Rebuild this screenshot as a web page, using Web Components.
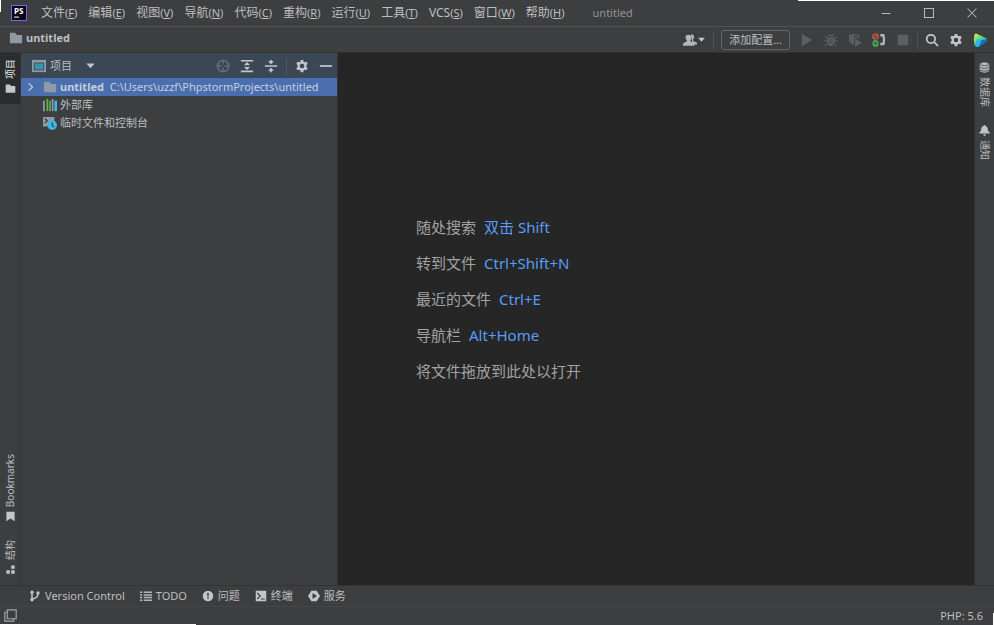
<!DOCTYPE html>
<html lang="zh-CN">
<head>
    <meta charset="UTF-8">
    <meta name="viewport" content="width=device-width, initial-scale=1.0">
    <title>untitled</title>
    <style>
        html, body {
            height: 100%;
            margin: 0;
        }
        body {
            background: #3c3e40;
            color: #bdbfc1;
            font: 11px/16px "Noto Sans", "Noto Sans CJK SC", sans-serif;
        }
    </style>
</head>
<body>

    <ide-window>
        <ide-titlebar slot="title">
            <ide-menu key="F">文件</ide-menu>
            <ide-menu key="E">编辑</ide-menu>
            <ide-menu key="V">视图</ide-menu>
            <ide-menu key="N">导航</ide-menu>
            <ide-menu key="C">代码</ide-menu>
            <ide-menu key="R">重构</ide-menu>
            <ide-menu key="U">运行</ide-menu>
            <ide-menu key="T">工具</ide-menu>
            <ide-menu key="S">VCS</ide-menu>
            <ide-menu key="W">窗口</ide-menu>
            <ide-menu key="H">帮助</ide-menu>
            <span slot="caption">untitled</span>
        </ide-titlebar>

        <ide-navbar slot="nav">untitled</ide-navbar>

        <ide-strip slot="left" side="left">
            <ide-strip-button icon="folder" active>项目</ide-strip-button>
            <ide-strip-button slot="end" icon="bookmark">Bookmarks</ide-strip-button>
            <ide-strip-button slot="end" icon="structure">结构</ide-strip-button>
        </ide-strip>

        <ide-project slot="project">
            <span slot="heading">项目</span>
            <ide-tree-row icon="folder-blue" expandable selected><b>untitled</b> C:\Users\uzzf\PhpstormProjects\untitled</ide-tree-row>
            <ide-tree-row icon="library">外部库</ide-tree-row>
            <ide-tree-row icon="scratch">临时文件和控制台</ide-tree-row>
        </ide-project>

        <ide-welcome slot="editor">
            <ide-hint keys="双击 Shift">随处搜索</ide-hint>
            <ide-hint keys="Ctrl+Shift+N">转到文件</ide-hint>
            <ide-hint keys="Ctrl+E">最近的文件</ide-hint>
            <ide-hint keys="Alt+Home">导航栏</ide-hint>
            <ide-hint>将文件拖放到此处以打开</ide-hint>
        </ide-welcome>

        <ide-strip slot="right" side="right">
            <ide-strip-button icon="database">数据库</ide-strip-button>
            <ide-strip-button icon="bell">通知</ide-strip-button>
        </ide-strip>

        <ide-toolbar slot="tools">
            <ide-tool icon="branch">Version Control</ide-tool>
            <ide-tool icon="list">TODO</ide-tool>
            <ide-tool icon="problem">问题</ide-tool>
            <ide-tool icon="terminal">终端</ide-tool>
            <ide-tool icon="service">服务</ide-tool>
        </ide-toolbar>

        <ide-status slot="status">PHP: 5.6</ide-status>
    </ide-window>

</body>

<script>

    // every icon is drawn on a 16 x 16 grid
    const ICONS = {
        'folder': '<path fill="#c3c5c7" d="M1 2h6l2 2.500h6V14H1z"/>',
        'folder-blue': '<path fill="#8e9ba5" d="M1 2h6l2 2.500h6V14H1z"/>',
        'bookmark': '<path fill="#c3c5c7" d="M2 1h12v14l-6-4-6 4z"/>',
        'structure': '<path fill="#c3c5c7" d="M9 2h5v5H9zM2 9h5v5H2zM9 9h5v5H9z"/>',
        'database': '<g fill="#b4b6b8"><path d="M1 3q7-5 14 0v10q-7 5-14 0z"/></g><path fill="none" stroke="#3c3e40" stroke-width="1" d="M1 4q7 3 14 0M1 8q7 3 14 0M1 12q7 3 14 0"/>',
        'bell': '<path fill="#c0c2c4" d="M8 0q1 0 1.500 1.500Q13 2.500 13 8l2.500 3v1.500H.5V11L3 8q0-5.500 3.500-6.500Q7 0 8 0zM6 13.500h4Q9.500 16 8 16t-2-2.500z"/>',
        'window': '<path fill="#8e9ba5" d="M0 1h16v14H0z"/><path fill="#3b4754" d="M2 4h12v9H2z"/><path fill="#3694ac" d="M3 5h10v7H3z"/>',
        'down': '<path fill="#c3c5c7" d="M2 5h12l-6 7z"/>',
        'chevron': '<path fill="none" stroke="#b8c2d2" stroke-width="1.800" d="M5 3l5 5-5 5"/>',
        'target': '<g fill="none" stroke="#66717b" stroke-width="1.500"><circle cx="8" cy="8" r="6.500"/><path d="M8 1v5M8 10v5M1 8h5M10 8h5"/></g>',
        'expand': '<g fill="#c3c5c7"><path d="M1 1h14v1.800H1zM1 13.200h14V15H1zM8 3.500l3.500 3.500h-7zM8 12.500l3.500-3.500h-7z"/></g>',
        'collapse': '<g fill="#c3c5c7"><path d="M1 7.100h14v1.800H1zM8 6L4.500 2.500H7V1h2v1.500h2.500zM8 10l-3.500 3.500H7V15h2v-1.500h2.500z"/></g>',
        'gear': '<path fill="#c3c5c7" fill-rule="evenodd" d="M6.600 1h2.800l.4 2 1.300.8 2-.7 1.400 2.400L13 7v2l1.500 1.500-1.400 2.400-2-.7-1.300.8-.4 2H6.600l-.4-2-1.300-.8-2 .7-1.400-2.400L3 9V7L1.500 5.500l1.400-2.400 2 .7L6.200 3zM8 5.400a2.600 2.600 0 1 0 0 5.200 2.600 2.600 0 0 0 0-5.200z"/>',
        'hide': '<path fill="#c3c5c7" d="M1 7h14v2H1z"/>',
        'library': '<path fill="#8e9ba5" d="M0 3h2v12H0z"/><path fill="#62b543" d="M4 1h2v14H4z"/><path fill="#4fae5a" d="M7 3h2v12H7z"/><path fill="#8e9ba5" d="M10 1h2v14h-2z"/><path fill="#40b6e0" d="M13 3h3v12h-3z"/>',
        'scratch': '<path fill="#8e9ba5" d="M0 1h13v7L6 12H0z"/><path fill="none" stroke="#34383b" stroke-width="1.300" d="M2 3l3 2.500L2 8M6 8.500h2"/><circle cx="10.500" cy="10.500" r="5.500" fill="#40b6e0"/><path fill="none" stroke="#234a5c" stroke-width="1.300" d="M10.500 7v4l2.500 1.500"/>',
        'user': '<g fill="#b4b6b8"><path d="M9 1.500c4 0 4.500 3.500 2.500 6V9l4.500 2v2H11z"/><path d="M6 2c4 0 4.500 4 2.500 6.500v1l4.500 2.500v2.500H0V12l4.500-2.500v-1C2 6 2.500 2 6 2z"/></g>',
        'play': '<path fill="#5c5e60" d="M2 1l12 7-12 7z"/>',
        'bug': '<g fill="#5c5e60"><path d="M5 4q3-4 6 0zM4 5h8v5q-1 5-4 5t-4-5z"/><path stroke="#5c5e60" stroke-width="1.300" d="M1 4l4 3M15 4l-4 3M0 9h16M1 15l4-4M15 15l-4-4M5 1l2 3M11 1L9 4"/></g><path stroke="#3c3e40" d="M6 8h4M6 11h4"/>',
        'coverage': '<path fill="#5c5e60" d="M1 2l6-1 6 1v4L7 6v8q-6-3-6-7zM8 6l8 5-8 5z"/><path fill="#3c3e40" d="M7 3h4v2H7z"/>',
        'phone': '<g fill="none"><circle cx="4" cy="4" r="3" stroke="#c75450" stroke-width="1.600"/><path d="M2 6l4-4" stroke="#c75450" stroke-width="1.300"/><ellipse cx="4" cy="12" rx="2.500" ry="3" stroke="#49a650" stroke-width="2"/><path d="M1 10h6M1 13h6" stroke="#49a650"/></g><path fill="#b4b6b8" d="M9.500 1H14q2 7 0 13H9.500v-3H12q.8-3.500 0-7H9.500z"/>',
        'stop': '<path fill="#5c5e60" d="M2 2h12v12H2z"/>',
        'search': '<g fill="none" stroke="#c3c5c7" stroke-width="2"><circle cx="6.800" cy="6.800" r="4.800"/><path d="M10 10l5 5"/></g>',
        'toolbox': '<defs><linearGradient id="g" x1="0" y1="0" x2="1" y2="1"><stop offset="0" stop-color="#f8ee3c"/><stop offset=".45" stop-color="#4fd58a"/><stop offset="1" stop-color="#1d9be8"/></linearGradient></defs><path fill="url(#g)" d="M2 1q1-1 3 0l10 5q2 2 0 4l-9 6q-3 0-4-2Q0 8 2 1z"/><path fill="#1769c9" d="M9 8l7-1q0 2-1 3l-9 6z"/><path fill="#27b9e8" d="M5 6l5 3-4 7q-3 0-4-2z"/>',
        'branch': '<g fill="none" stroke="#c3c5c7" stroke-width="2"><path d="M4 3v10M4 12q8-1 8-7"/></g><g fill="#c3c5c7"><circle cx="4" cy="3" r="2.200"/><circle cx="4" cy="13" r="2.200"/><circle cx="12" cy="4" r="2.200"/></g>',
        'list': '<path fill="#b4b6b8" d="M0 2h3v2H0zM5 2h11v2H5zM0 5.500h3v2H0zM5 5.500h11v2H5zM0 9h3v2H0zM5 9h11v2H5zM0 12.500h3v2H0zM5 12.500h11v2H5z"/>',
        'problem': '<circle cx="8" cy="8" r="7" fill="#c3c5c7"/><path fill="#3c3e40" d="M7 3.500h2v5H7zM7 10h2v2H7z"/>',
        'terminal': '<path fill="#c3c5c7" d="M1 1h14v14H1z"/><path fill="none" stroke="#3c3e40" stroke-width="1.600" d="M3 4l4 4-4 4M8 12h5"/>',
        'service': '<path fill="#c3c5c7" d="M4.500 1h7L16 8l-4.500 7h-7L0 8z"/><path fill="#3c3e40" d="M6 4l6 4-6 4z"/>',
        'layout': '<g fill="none" stroke="#a5a7a9" stroke-width="1.400"><path d="M4 1h11v11H4z"/><path d="M4 4H1v11h11v-3"/></g>',
        'minimize': '<path fill="#b4b6b8" d="M2 8h12v1.300H2z"/>',
        'maximize': '<path fill="none" stroke="#b4b6b8" stroke-width="1.400" d="M2 2h12v12H2z"/>',
        'close': '<path fill="none" stroke="#b4b6b8" stroke-width="1.400" d="M2 2l12 12M14 2L2 14"/>',
        'logo': '<path fill="#7567e8" d="M0 0h16v16H0z"/><path fill="#0c0718" d="M1 1h14v14H1z"/><path fill="#d8d8dc" d="M3 11.500h5v1.200H3z"/>'
    };

    // shared by all the components: open shadow root + cloned template
    class IdeElement extends HTMLElement {
        constructor() {
            super();
            this.attachShadow({mode: 'open'});
        }

        connectedCallback() {
            const template = document.createElement('template');
            template.innerHTML = `
                <style>
                    * { box-sizing: border-box; }
                    :host { display: block; }
                    button {
                        display: flex;
                        align-items: center;
                        margin: 0;
                        padding: 0;
                        border: 0;
                        background: none;
                        color: inherit;
                        font: inherit;
                        white-space: nowrap;
                    }
                </style>
                ${this.render()}
            `;
            this.shadowRoot.replaceChildren(template.content.cloneNode(true));
        }
    }

    class IdeIcon extends IdeElement {
        render() {
            return `
                <style>
                    :host { display: block; flex: none; width: var(--icon, 14px); height: var(--icon, 14px); }
                    svg { display: block; width: 100%; height: 100%; }
                </style>
                <svg viewBox="0 0 16 16" aria-hidden="true">${ICONS[this.getAttribute('name')]}</svg>
            `;
        }
    }

    class IdeWindow extends IdeElement {
        render() {
            return `
                <style>
                    :host {
                        position: relative;
                        display: grid;
                        grid-template-rows: 27px 26px 1fr 21px 19px;
                        height: 100vh;
                        overflow: hidden;
                    }
                    main {
                        display: grid;
                        grid-template-columns: 21px minmax(200px, 317px) 1fr 20px;
                        min-height: 0;
                    }
                    /* bright desktop showing at the window's edges */
                    i { position: absolute; background: #fff; }
                    .nw { left: 0; top: 0; width: 1px; height: 12px; }
                    .ne { right: 0; top: 0; width: 196px; height: 1px; }
                    .sw { left: 0; bottom: 0; width: 196px; height: 1px; }
                    .se { right: 0; bottom: 0; width: 1px; height: 12px; }
                </style>
                <slot name="title"></slot>
                <slot name="nav"></slot>
                <main>
                    <slot name="left"></slot>
                    <slot name="project"></slot>
                    <slot name="editor"></slot>
                    <slot name="right"></slot>
                </main>
                <slot name="tools"></slot>
                <slot name="status"></slot>
                <i class="nw"></i><i class="ne"></i><i class="sw"></i><i class="se"></i>
            `;
        }
    }

    class IdeTitlebar extends IdeElement {
        render() {
            return `
                <style>
                    :host { display: flex; align-items: center; padding-left: 11px; border-bottom: 1px solid #505254; }
                    .logo { position: relative; --icon: 16px; }
                    .logo span { position: absolute; left: 3px; top: 1px; color: #fff; font: bold 8px/9px "Noto Sans", sans-serif; }
                    nav { display: flex; gap: 11px; margin-left: 14px; }
                    .caption { margin-left: 28px; color: #929496; }
                    .buttons { display: flex; gap: 31px; margin-left: auto; padding-right: 16px; --icon: 12px; }
                </style>
                <div class="logo"><ide-icon name="logo"></ide-icon><span>PS</span></div>
                <nav><slot></slot></nav>
                <div class="caption"><slot name="caption"></slot></div>
                <div class="buttons">
                    <button aria-label="最小化"><ide-icon name="minimize"></ide-icon></button>
                    <button aria-label="最大化"><ide-icon name="maximize"></ide-icon></button>
                    <button aria-label="关闭"><ide-icon name="close"></ide-icon></button>
                </div>
            `;
        }
    }

    class IdeMenu extends IdeElement {
        render() {
            return `
                <style>
                    button { display: block; font-size: 12px; }
                    small { font-size: 11px; }
                </style>
                <button><slot></slot><small>(<u>${this.getAttribute('key')}</u>)</small></button>
            `;
        }
    }

    class IdeNavbar extends IdeElement {
        render() {
            return `
                <style>
                    :host { display: flex; align-items: center; padding: 0 7px 0 9px; border-bottom: 1px solid #2f3133; }
                    .crumb { display: flex; align-items: center; gap: 3px; margin-bottom: 3px; font-weight: bold; }
                    .actions { display: flex; align-items: center; gap: 10px; margin-left: auto; }
                    .user { gap: 0; }
                    .user ide-icon + ide-icon { --icon: 9px; }
                    .config { height: 20px; padding: 0 7px; border: 1px solid #636567; border-radius: 3px; }
                    hr { width: 1px; height: 18px; margin: 0 -3px; border: 0; background: #505254; }
                </style>
                <div class="crumb"><ide-icon name="folder-blue"></ide-icon><slot></slot></div>
                <div class="actions">
                    <button class="user" aria-label="用户"><ide-icon name="user"></ide-icon><ide-icon name="down"></ide-icon></button>
                    <hr>
                    <button class="config">添加配置...</button>
                    <button aria-label="运行"><ide-icon name="play"></ide-icon></button>
                    <button aria-label="调试"><ide-icon name="bug"></ide-icon></button>
                    <button aria-label="覆盖率"><ide-icon name="coverage"></ide-icon></button>
                    <button aria-label="监听"><ide-icon name="phone"></ide-icon></button>
                    <button aria-label="停止"><ide-icon name="stop"></ide-icon></button>
                    <hr>
                    <button aria-label="搜索"><ide-icon name="search"></ide-icon></button>
                    <button aria-label="设置"><ide-icon name="gear"></ide-icon></button>
                    <button aria-label="工具箱"><ide-icon name="toolbox"></ide-icon></button>
                </div>
            `;
        }
    }

    class IdeStrip extends IdeElement {
        render() {
            return `
                <style>
                    :host { display: flex; flex-direction: column; justify-content: space-between; }
                    :host([side="left"]) { border-right: 1px solid #323436; }
                    :host([side="right"]) { padding-top: 9px; border-left: 1px solid #323436; }
                    div { display: flex; flex-direction: column; gap: 18px; }
                    .end { padding-bottom: 10px; }
                </style>
                <div><slot></slot></div>
                <div class="end"><slot name="end"></slot></div>
            `;
        }
    }

    class IdeStripButton extends IdeElement {
        render() {
            return `
                <style>
                    :host { --icon: 11px; font-size: 10px; }
                    :host([active]) { padding: 6px 0 10px; background: #2a2c2e; color: #e6e8ea; }
                    button { flex-direction: column; gap: 4px; width: 100%; }
                    span { writing-mode: vertical-rl; text-orientation: sideways; }
                    .left { flex-direction: column-reverse; }
                    .left span { transform: rotate(180deg); }
                </style>
                <button class="${this.parentElement.getAttribute('side')}">
                    <ide-icon name="${this.getAttribute('icon')}"></ide-icon>
                    <span><slot></slot></span>
                </button>
            `;
        }
    }

    class IdeProject extends IdeElement {
        render() {
            return `
                <style>
                    :host { border-right: 1px solid #323436; }
                    header { display: flex; align-items: center; height: 25px; padding: 0 4px 0 11px; background: #3b4754; }
                    .view { gap: 4px; }
                    .view ide-icon:last-child { --icon: 11px; margin-left: 9px; }
                    .actions { display: flex; align-items: center; gap: 10px; margin-left: auto; }
                    hr { width: 1px; height: 18px; margin: 0 -2px; border: 0; background: #4d5863; }
                </style>
                <header>
                    <button class="view"><ide-icon name="window"></ide-icon><slot name="heading"></slot><ide-icon name="down"></ide-icon></button>
                    <div class="actions">
                        <button aria-label="定位"><ide-icon name="target"></ide-icon></button>
                        <button aria-label="全部展开"><ide-icon name="expand"></ide-icon></button>
                        <button aria-label="全部折叠"><ide-icon name="collapse"></ide-icon></button>
                        <hr>
                        <button aria-label="设置"><ide-icon name="gear"></ide-icon></button>
                        <button aria-label="隐藏"><ide-icon name="hide"></ide-icon></button>
                    </div>
                </header>
                <div role="tree"><slot></slot></div>
            `;
        }
    }

    class IdeTreeRow extends IdeElement {
        render() {
            const arrow = this.hasAttribute('expandable') ? '<ide-icon name="chevron"></ide-icon>' : '';
            return `
                <style>
                    :host { display: flex; align-items: center; height: 18px; padding-left: 4px; white-space: nowrap; }
                    :host([selected]) { background: #4b6eaf; color: #c5cedd; }
                    .arrow { flex: none; width: 18px; --icon: 12px; }
                    .text { margin-left: 3px; }
                    ::slotted(b) { margin-right: 3px; }
                </style>
                <div class="arrow">${arrow}</div>
                <ide-icon name="${this.getAttribute('icon')}"></ide-icon>
                <div class="text" role="treeitem"><slot></slot></div>
            `;
        }
    }

    class IdeWelcome extends IdeElement {
        render() {
            return `
                <style>
                    :host {
                        display: flex;
                        flex-direction: column;
                        justify-content: center;
                        gap: 16px;
                        padding: 0 0 40px 78px;
                        background: #262626;
                        color: #a0a2a4;
                        font-size: 15px;
                        line-height: 20px;
                    }
                </style>
                <slot></slot>
            `;
        }
    }

    class IdeHint extends IdeElement {
        render() {
            const keys = this.getAttribute('keys');
            return `
                <style>
                    :host { display: flex; gap: 8px; }
                    kbd { color: #589df6; font: inherit; }
                </style>
                <span><slot></slot></span>
                ${keys ? `<kbd>${keys}</kbd>` : ''}
            `;
        }
    }

    class IdeToolbar extends IdeElement {
        render() {
            return `
                <style>
                    :host { display: flex; align-items: center; gap: 15px; padding-left: 29px; border-top: 1px solid #323436; }
                </style>
                <slot></slot>
            `;
        }
    }

    class IdeTool extends IdeElement {
        render() {
            return `
                <style>
                    :host { --icon: 12px; }
                    button { gap: 4px; }
                </style>
                <button><ide-icon name="${this.getAttribute('icon')}"></ide-icon><slot></slot></button>
            `;
        }
    }

    class IdeStatus extends IdeElement {
        render() {
            return `
                <style>
                    :host { display: flex; align-items: center; justify-content: space-between; padding: 0 11px 1px 4px; border-top: 1px solid #434547; --icon: 13px; }
                </style>
                <button aria-label="工具窗口"><ide-icon name="layout"></ide-icon></button>
                <span><slot></slot></span>
            `;
        }
    }

    customElements.define('ide-icon', IdeIcon)
    customElements.define('ide-window', IdeWindow)
    customElements.define('ide-titlebar', IdeTitlebar)
    customElements.define('ide-menu', IdeMenu)
    customElements.define('ide-navbar', IdeNavbar)
    customElements.define('ide-strip', IdeStrip)
    customElements.define('ide-strip-button', IdeStripButton)
    customElements.define('ide-project', IdeProject)
    customElements.define('ide-tree-row', IdeTreeRow)
    customElements.define('ide-welcome', IdeWelcome)
    customElements.define('ide-hint', IdeHint)
    customElements.define('ide-toolbar', IdeToolbar)
    customElements.define('ide-tool', IdeTool)
    customElements.define('ide-status', IdeStatus)

</script>

</html>
